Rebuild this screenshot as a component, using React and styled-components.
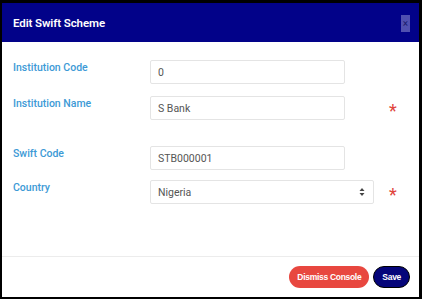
import React from "react";
import styled, { createGlobalStyle } from "styled-components";

const GlobalStyle = createGlobalStyle`
  html, body {
    margin: 0;
    padding: 0;
    background: #ffffff;
  }
  body {
    font-family: Roboto, "Liberation Sans", Arial, sans-serif;
  }
`;

export default function App() {
  return (
    <>
      <GlobalStyle />
      <Frame>
        <Header>
          <Title>Edit Swift Scheme</Title>
          <CloseBox aria-label="close">×</CloseBox>
        </Header>
        <Body>
          <Row>
            <Label>Institution Code</Label>
            <Input defaultValue="0" readOnly />
          </Row>
          <Row $gap={12}>
            <Label>Institution Name</Label>
            <Input defaultValue="S Bank" readOnly />
            <Required>*</Required>
          </Row>
          <Row $gap={26}>
            <Label>Swift Code</Label>
            <Input defaultValue="STB000001" readOnly />
          </Row>
          <Row $gap={10}>
            <Label>Country</Label>
            <SelectBox>
              <span>Nigeria</span>
              <Arrows viewBox="0 0 6 10" width="6" height="10">
                <path d="M3 1 L5.5 4 H0.5 Z" fill="#444" />
                <path d="M3 9 L5.5 6 H0.5 Z" fill="#444" />
              </Arrows>
            </SelectBox>
            <Required $wide>*</Required>
          </Row>
        </Body>
        <Footer>
          <PillButton $color="#e8473f">Dismiss Console</PillButton>
          <PillButton $color="#05057a" $dark>Save</PillButton>
        </Footer>
      </Frame>
    </>
  );
}

const Frame = styled.div`
  box-sizing: border-box;
  width: 422px;
  height: 299px;
  border-top: 3px solid #000;
  border-left: 2px solid #000;
  border-right: 3px solid #000;
  border-bottom: 2px solid #000;
  display: flex;
  flex-direction: column;
  background: #fff;
`;

const Header = styled.div`
  height: 39px;
  background: #020289;
  display: flex;
  align-items: center;
  justify-content: space-between;
  padding: 0 9px 0 11px;
  flex-shrink: 0;
`;

const Title = styled.div`
  color: #fff;
  font-size: 11.5px;
  font-weight: 600;
  letter-spacing: -0.1px;
`;

const CloseBox = styled.div`
  width: 9px;
  height: 17px;
  background: #5050b0;
  color: #1a1a6e;
  font-size: 10px;
  line-height: 17px;
  text-align: center;
  margin-top: 2px;
`;

const Body = styled.div`
  flex: 1;
  padding: 18px 0 0 11px;
  display: flex;
  flex-direction: column;
`;

const Row = styled.div`
  display: flex;
  align-items: flex-start;
  height: 24px;
  margin-top: ${(p) => p.$gap || 0}px;
`;

const Label = styled.div`
  width: 137px;
  flex-shrink: 0;
  color: #3d9ad6;
  font-size: 10.5px;
  font-weight: 500;
  line-height: 14px;
  padding-top: 1px;
`;

const Input = styled.input`
  box-sizing: border-box;
  width: 195px;
  height: 24px;
  border: 1px solid #e4e4e4;
  border-radius: 2px;
  padding: 0 7px;
  font-family: Roboto, "Liberation Sans", Arial, sans-serif;
  font-size: 10.5px;
  color: #555;
  outline: none;
  background: #fff;
`;

const SelectBox = styled.div`
  box-sizing: border-box;
  width: 224px;
  height: 24px;
  border: 1px solid #e4e4e4;
  border-radius: 2px;
  padding: 0 8px 0 7px;
  display: flex;
  align-items: center;
  justify-content: space-between;
  font-size: 10.5px;
  color: #555;
`;

const Arrows = styled.svg`
  display: block;
`;

const Required = styled.span`
  color: #e0443c;
  font-size: 18px;
  height: 24px;
  line-height: 30px;
  margin-left: ${(p) => (p.$wide ? 15 : 44)}px;
`;

const Footer = styled.div`
  height: 40px;
  border-top: 1px solid #ececec;
  display: flex;
  align-items: center;
  justify-content: flex-end;
  gap: 4px;
  padding-right: 9px;
  flex-shrink: 0;
`;

const PillButton = styled.button`
  height: 22px;
  border: ${(p) => (p.$dark ? "1px solid #000" : "none")};
  border-radius: 11px;
  background: ${(p) => p.$color};
  color: #fff;
  font-family: "Liberation Sans", Arial, sans-serif;
  font-weight: 700;
  font-size: 8.5px;
  letter-spacing: -0.3px;
  padding: 0 8px;
  box-sizing: border-box;
`;
